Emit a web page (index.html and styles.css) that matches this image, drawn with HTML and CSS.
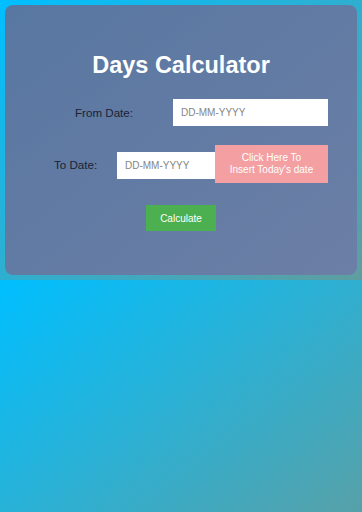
FILE: index.html
```html
<!DOCTYPE html>
<html lang="en">
<head>
<meta charset="utf-8">
<title>Days Calculator</title>
<link rel="stylesheet" href="styles.css">
</head>
<body>
  <main class="card">
    <h1 class="title">Days Calculator</h1>
    <div class="row row-from">
      <label class="label label-from" for="from">From Date:</label>
      <input class="date-input input-from" id="from" type="text" placeholder="DD-MM-YYYY">
    </div>
    <div class="row row-to">
      <label class="label label-to" for="to">To Date:</label>
      <input class="date-input input-to" id="to" type="text" placeholder="DD-MM-YYYY">
      <button class="today-btn" type="button">Click Here To<br>Insert Today's date</button>
    </div>
    <button class="calc-btn" type="button">Calculate</button>
  </main>
</body>
</html>
```
FILE: styles.css
```css
html {
  margin: 0;
}
body {
  margin: 5px;
  font-family: "Liberation Sans", Arial, sans-serif;
  background: linear-gradient(to bottom right, #00bfff, #5f9ea0);
}
.card {
  height: 270px;
  box-sizing: border-box;
  padding-top: 46px;
  border-radius: 8px;
  background: linear-gradient(to bottom right, #5877a1, #6c7fa6);
  display: flex;
  flex-direction: column;
}
.title {
  margin: 0;
  font-size: 23.5px;
  line-height: 28px;
  font-weight: bold;
  color: #ffffff;
  text-align: center;
}
.row {
  display: flex;
  align-items: center;
}
.row-from {
  margin-top: 20px;
  padding-left: 70px;
}
.row-to {
  margin-top: 19px;
  padding-left: 49px;
}
.label {
  font-size: 11.6px;
  color: #1c2235;
}
.label-from {
  width: 98px;
}
.label-to {
  width: 63px;
}
.date-input {
  height: 27px;
  box-sizing: border-box;
  border: none;
  margin: 0;
  padding: 0 0 0 8px;
  background: #ffffff;
  font-family: "Liberation Sans", Arial, sans-serif;
  font-size: 10px;
  color: #333;
  outline: none;
}
.date-input::placeholder {
  color: #858585;
}
.input-from {
  width: 155px;
}
.input-to {
  width: 98px;
  margin-top: 3px;
}
.today-btn {
  width: 113px;
  height: 38px;
  border: none;
  margin: 0;
  padding: 0;
  background: #f4a0a2;
  color: #ffffff;
  font-family: "Liberation Sans", Arial, sans-serif;
  font-size: 10px;
  line-height: 12px;
  text-align: center;
}
.calc-btn {
  align-self: center;
  margin-top: 22px;
  width: 70px;
  height: 26px;
  border: none;
  padding: 0;
  background: #4caf50;
  color: #ffffff;
  font-family: "Liberation Sans", Arial, sans-serif;
  font-size: 10px;
}
```
